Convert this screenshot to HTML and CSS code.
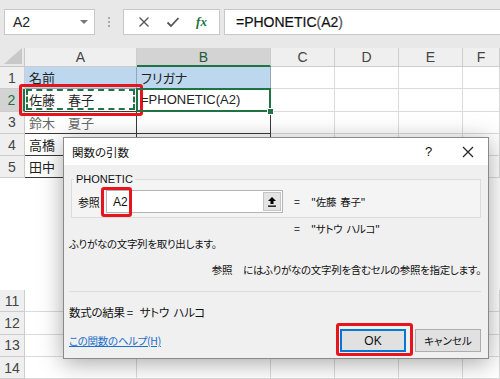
FILE: index.html
```html
<!DOCTYPE html>
<html>
<head>
  <meta charset="UTF-8" />
  <title>関数の引数</title>
  <link rel="stylesheet" href="styles.css">
</head>
<body>
<div class="app">
  <div class="toolbar">
    <div class="namebox"><span>A2</span><span class="caret"></span></div>
    <div class="grip"><i></i><i></i><i></i></div>
    <div class="fxbtns">
      <svg width="12" height="12" viewBox="0 0 12 12"><path d="M1.5 1.5 L10.5 10.5 M10.5 1.5 L1.5 10.5" stroke="#555" stroke-width="1.4" fill="none"/></svg>
      <svg width="14" height="12" viewBox="0 0 14 12"><path d="M1.5 6.5 L5 10 L12.5 2" stroke="#555" stroke-width="1.8" fill="none"/></svg>
      <span class="fx">fx</span>
    </div>
    <div class="formula">=PHONETIC<span class="paren">(</span>A2<span class="paren">)</span></div>
  </div>

  <div class="sheet">
    <div class="corner"><svg width="18" height="16" viewBox="0 0 18 16"><path d="M18 0 L18 16 L0 16 Z" fill="#c8c8c8"/></svg></div>
    <div class="ch">A</div><div class="ch sel">B</div><div class="ch">C</div><div class="ch">D</div><div class="ch">E</div><div class="ch">F</div>

    <div class="rh">1</div><div class="c t hd">名前</div><div class="c t hd">フリガナ</div><div class="c"></div><div class="c"></div><div class="c"></div><div class="c"></div>
    <div class="rh sel">2</div><div class="c t a2">佐藤　春子</div><div class="c t b2">=PHONETIC(A2)</div><div class="c"></div><div class="c"></div><div class="c"></div><div class="c"></div>
    <div class="rh">3</div><div class="c t faded">鈴木　夏子</div><div class="c t"></div><div class="c"></div><div class="c"></div><div class="c"></div><div class="c"></div>
    <div class="rh">4</div><div class="c t">高橋</div><div class="c t"></div><div class="c"></div><div class="c"></div><div class="c"></div><div class="c"></div>
    <div class="rh">5</div><div class="c t">田中</div><div class="c t"></div><div class="c"></div><div class="c"></div><div class="c"></div><div class="c"></div>
    <div class="gap"></div>
    <div class="rh">11</div><div class="c"></div><div class="c"></div><div class="c"></div><div class="c"></div><div class="c"></div><div class="c"></div>
    <div class="rh">12</div><div class="c"></div><div class="c"></div><div class="c"></div><div class="c"></div><div class="c"></div><div class="c"></div>
    <div class="rh">13</div><div class="c"></div><div class="c"></div><div class="c"></div><div class="c"></div><div class="c"></div><div class="c"></div>
    <div class="rh">14</div><div class="c"></div><div class="c"></div><div class="c"></div><div class="c"></div><div class="c"></div><div class="c"></div>
  </div>

  <div class="dialog">
    <div class="titlebar">
      <span class="title">関数の引数</span>
      <span class="help">?</span>
      <svg class="close" width="12" height="12" viewBox="0 0 12 12"><path d="M1 1 L11 11 M11 1 L1 11" stroke="#222" stroke-width="1.2" fill="none"/></svg>
    </div>
    <div class="dbody">
      <fieldset class="group">
        <legend>PHONETIC</legend>
        <div class="argrow">
          <span class="arglabel">参照</span>
          <div class="argbox">
            <span class="argval">A2</span><span class="cursor"></span>
            <span class="collapse"><svg width="10" height="11" viewBox="0 0 10 11"><path d="M5 1 L9 5 L6.5 5 L6.5 8 L3.5 8 L3.5 5 L1 5 Z" fill="#000"/><rect x="1" y="9.5" width="8" height="1.3" fill="#000"/></svg></span>
          </div>
          <span class="eq">=</span>
          <span class="argres">"佐藤&nbsp;&nbsp;春子"</span>
        </div>
      </fieldset>
      <div class="resline"><span class="eq">=</span><span class="argres">"サトウ&nbsp;&nbsp;ハルコ"</span></div>
      <div class="desc">ふりがなの文字列を取り出します。</div>
      <div class="argdesc"><span class="argname">参照</span>にはふりがなの文字列を含むセルの参照を指定します。</div>
      <div class="sep"></div>
      <div class="result">数式の結果 =&nbsp;&nbsp; サトウ&nbsp;&nbsp;ハルコ</div>
      <div class="footer">
        <a class="helplink" href="#">この関数のヘルプ(H)</a>
        <div class="buttons">
          <button class="btn ok">OK</button>
          <button class="btn">キャンセル</button>
        </div>
      </div>
    </div>
  </div>

  <div class="mark mark-a2"></div>
  <div class="mark mark-ref"></div>
  <div class="mark mark-ok"></div>
</div>
</body>
</html>
```

FILE: styles.css
```css
body { margin: 0; }
.app {
  position: relative;
  width: 500px;
  height: 379px;
  overflow: hidden;
  background: #fff;
  font-family: "Noto Sans CJK JP", sans-serif;
  font-feature-settings: "palt";
  color: #222;
}

/* formula bar */
.toolbar {
  height: 48px;
  box-sizing: border-box;
  padding-top: 9px;
  background: #e8e8e8;
  display: flex;
  align-items: flex-start;
}
.namebox {
  margin-left: 4px;
  width: 91px;
  height: 26px;
  box-sizing: border-box;
  background: #fff;
  border: 1px solid #c8c8c8;
  display: flex;
  align-items: center;
  justify-content: space-between;
  padding: 0 6px 0 8px;
  font: 14px "Liberation Sans", sans-serif;
}
.caret { border-left: 4px solid transparent; border-right: 4px solid transparent; border-top: 4px solid #777; }
.grip { width: 28px; height: 26px; display: flex; flex-direction: column; align-items: center; justify-content: center; gap: 2px; }
.grip i { width: 2px; height: 2px; background: #aaa; }
.fxbtns {
  width: 97px;
  height: 26px;
  box-sizing: border-box;
  background: #fff;
  border: 1px solid #c8c8c8;
  display: flex;
  align-items: center;
  justify-content: space-around;
  padding: 0 4px 0 6px;
}
.fx { font: italic bold 13px "Liberation Serif", serif; color: #217346; }
.formula {
  flex: 1;
  margin-left: 4px;
  height: 26px;
  box-sizing: border-box;
  background: #fff;
  border: 1px solid #c8c8c8;
  border-right: none;
  padding-left: 11px;
  font: 14px/24px "Liberation Sans", sans-serif;
  color: #111;
  -webkit-text-stroke: 0.2px #111;
}
.paren { color: #666; }

/* sheet */
.sheet {
  display: grid;
  grid-template-columns: 25px 112px 134px 64px 64px 64px 1fr;
  grid-template-rows: 19px repeat(5, 22.3px) 111.5px repeat(4, 22.3px);
  font-size: 13px;
}
.corner { background: #e8e8e8; border-right: 1px solid #c8c8c8; border-bottom: 1px solid #c8c8c8; display: flex; align-items: flex-end; justify-content: flex-end; padding: 0 2px 2px 0; }
.ch, .rh {
  background: #efefef;
  border-right: 1px solid #cdcdcd;
  border-bottom: 1px solid #cdcdcd;
  color: #444;
  font: 14px "Liberation Sans", sans-serif;
  display: flex;
  align-items: center;
  justify-content: center;
}
.ch.sel { background: #d3d3d3; border-bottom: 2px solid #217346; color: #1d5b3a; }
.rh.sel { background: #d3d3d3; border-right: 2px solid #217346; color: #217346; }
.c {
  position: relative;
  border-right: 1px solid #dadada;
  border-bottom: 1px solid #dadada;
  padding-left: 4px;
  display: flex;
  align-items: center;
  white-space: nowrap;
}
.c.t { border-color: #3a3a3a; }
.c.hd { background: #bdd7ee; border-color: #8fa6bb; }
.c.faded { color: #666; }
.b2 { font-family: "Liberation Sans", sans-serif; z-index: 1; }
.b2::before { content: ""; position: absolute; left: -1px; top: -1px; right: -1px; bottom: -1px; border: 2px solid #217346; }
.b2::after { content: ""; position: absolute; right: -4px; bottom: -4px; width: 5px; height: 5px; background: #217346; border: 1px solid #fff; }
.a2::after { content: ""; position: absolute; left: 1px; top: 0; right: 1px; bottom: 1px; border: 2px dashed #217346; }
.gap { grid-column: 1 / -1; background: #fff; }

/* dialog */
.dialog {
  position: absolute;
  left: 63px;
  top: 137px;
  width: 426px;
  height: 222px;
  box-sizing: border-box;
  background: #f0f0f0;
  border: 1px solid #8a8a8a;
  box-shadow: 0 4px 22px rgba(0, 0, 0, 0.35);
  font-size: 10.5px;
  letter-spacing: -0.3px;
  color: #111;
}
.titlebar { height: 27px; background: #fff; display: flex; align-items: center; padding-left: 8px; }
.title { flex: 1; font-size: 11.5px; letter-spacing: 0; }
.help { font: 13px "Liberation Sans", sans-serif; margin-right: 30px; }
.close { margin-right: 14px; }
.dbody { padding: 0 7px; }
.group {
  margin: 6px 0 0;
  padding: 0 0 4px 0;
  border: 1px solid #dcdcdc;
  background: #f4f4f4;
}
.group legend { padding: 0 2px; margin-left: 2px; font: 11px/16px "Liberation Sans", sans-serif; letter-spacing: 0; }
.argrow { margin-top: 3px; padding-left: 6px; display: flex; align-items: center; height: 23px; }
.arglabel { width: 24px; margin-right: 4px; font-size: 11px; }
.argbox {
  position: relative;
  width: 177px;
  height: 23px;
  box-sizing: border-box;
  background: #fff;
  border: 1px solid #b4b4b4;
  display: flex;
  align-items: center;
  padding-left: 6px;
  font: 12px "Liberation Sans", sans-serif;
  letter-spacing: 0;
}
.cursor { width: 1px; height: 14px; background: #000; margin-left: 1px; }
.collapse {
  margin-left: auto;
  width: 18px;
  height: 19px;
  margin-right: 1px;
  box-sizing: border-box;
  background: #e4e4e4;
  border: 1px solid #c4c4c4;
  display: flex;
  align-items: center;
  justify-content: center;
}
.eq { width: 17px; margin-left: 11px; }
.resline { margin-top: 4px; line-height: 14px; padding-left: 212px; display: flex; }
.desc { margin: 1px 0 0 -2px; line-height: 14px; }
.argdesc { margin-top: 12px; line-height: 14px; text-align: right; }
.argname { margin-right: 11px; }
.sep { margin-top: 14px; height: 1px; background: #dcdcdc; margin-left: -2px; }
.result { margin: 12px 0 0 -2px; line-height: 16px; font-size: 11.5px; }
.footer { margin-top: 9px; display: flex; align-items: center; justify-content: space-between; }
.helplink { margin-left: -2px; color: #1a6fc9; text-decoration: underline; }
.buttons { display: flex; gap: 9px; }
.btn {
  width: 66px;
  height: 23px;
  background: #e1e1e1;
  border: 1px solid #adadad;
  font-family: "Noto Sans CJK JP", sans-serif;
  font-feature-settings: "palt";
  font-size: 10.5px;
  color: #111;
  padding: 0;
}
.btn.ok { border: 2px solid #0078d7; font: 12px "Liberation Sans", sans-serif; }

/* red callouts */
.mark { position: absolute; border: 3px solid #e8141c; border-radius: 3px; box-sizing: border-box; }
.mark-a2 { left: 19px; top: 84px; width: 124px; height: 32px; }
.mark-ref { left: 101px; top: 187px; width: 31px; height: 30px; }
.mark-ok { left: 336px; top: 323px; width: 77px; height: 33px; }
```
